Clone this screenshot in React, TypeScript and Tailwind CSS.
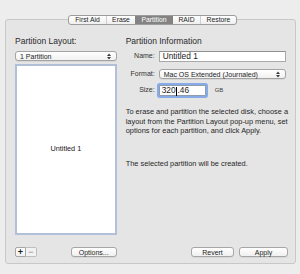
function UpDown() {
  return (
    <svg width="4" height="7" viewBox="0 0 4 7" className="shrink-0">
      <path d="M0 3 L2 0.5 L4 3 Z" fill="#3a3a3a" />
      <path d="M0 4 L2 6.5 L4 4 Z" fill="#3a3a3a" />
    </svg>
  );
}

function Popup({ label, className }: { label: string; className?: string }) {
  return (
    <div
      className={`flex items-center justify-between rounded-[3px] border border-[#a3a3a3] bg-gradient-to-b from-white to-[#f1f1f1] pl-[4px] pr-[5px] shadow-[0_1px_0_rgba(0,0,0,0.06)] ${className ?? ""}`}
    >
      <span className="text-[7px] leading-none text-[#1e1e1e]">{label}</span>
      <UpDown />
    </div>
  );
}

function Button({ label, className }: { label: string; className?: string }) {
  return (
    <div
      className={`flex h-[10px] items-center justify-center rounded-[3px] border border-[#a6a6a6] bg-gradient-to-b from-white to-[#f0f0f0] text-[7px] leading-none text-[#1e1e1e] shadow-[0_1px_0_rgba(0,0,0,0.06)] ${className ?? ""}`}
    >
      {label}
    </div>
  );
}

const tabs = [
  { name: "First Aid", w: "w-[37px]" },
  { name: "Erase", w: "w-[29px]" },
  { name: "Partition", w: "w-[38px]", active: true },
  { name: "RAID", w: "w-[27px]" },
  { name: "Restore", w: "w-[36px]" },
];

export default function App() {
  return (
    <div className="h-[274px] w-[300px] overflow-hidden bg-[#ededed] pl-[5px] pr-[4px] pt-[15px] font-['Liberation_Sans',Arial,sans-serif] text-[#222]">
      {/* segmented tabs */}
      <div className="relative z-10 -mb-[6px] ml-[63px] flex h-[10px] w-fit overflow-hidden rounded-[3px] border border-[#9c9c9c] bg-gradient-to-b from-white to-[#efefef]">
        {tabs.map((t, i) => (
          <div
            key={t.name}
            className={`flex items-center justify-center text-[6.8px] leading-none ${t.w} ${
              t.active ? "bg-[#838383] text-white" : "text-[#222]"
            } ${i > 0 && !t.active && !tabs[i - 1].active ? "border-l border-[#cfcfcf]" : ""}`}
          >
            {t.name}
          </div>
        ))}
      </div>

      {/* panel */}
      <div className="flex h-[245px] rounded-[3px] border border-[#c8c8c8] bg-[#e5e5e5] pb-[6px] pl-[9px] pr-[7px] pt-[16px]">
        {/* left column */}
        <div className="flex w-[102px] flex-col">
          <div className="h-[10px] text-[8.5px] leading-[10px] text-[#2a2a2a]">Partition Layout:</div>
          <Popup label="1 Partition" className="mt-[5px] h-[10px]" />
          <div className="mt-[3px] flex flex-1 items-center justify-center border-2 border-[#b1bfd9] bg-white">
            <span className="text-[7.3px] text-[#222]">Untitled 1</span>
          </div>
          <div className="mt-[12px] flex h-[10px] items-center justify-between">
            <div className="flex">
              <div className="flex h-[10px] w-[11px] items-center justify-center rounded-l-[2px] border border-[#a6a6a6] bg-gradient-to-b from-white to-[#f0f0f0] text-[9px] font-bold leading-none text-[#1a1a1a]">
                +
              </div>
              <div className="flex h-[10px] w-[11px] items-center justify-center rounded-r-[2px] border border-l-0 border-[#bdbdbd] bg-[#f2f2f2] text-[9px] font-bold leading-none text-[#a9a9a9]">
                −
              </div>
            </div>
            <Button label="Options..." className="w-[46px]" />
          </div>
        </div>

        {/* right column */}
        <div className="ml-[9px] flex flex-1 flex-col">
          <div className="h-[10px] text-[8.5px] leading-[10px] text-[#2a2a2a]">Partition Information</div>

          <div className="mt-[5px] grid h-[11px] grid-cols-[29px_1fr] items-center gap-x-[4px] pr-[2px]">
            <span className="text-right text-[7px] text-[#333]">Name:</span>
            <div className="flex h-[11px] items-center border border-[#a9a9a9] border-t-[#8f8f8f] bg-white pl-[3px] text-[8.3px] leading-none">
              Untitled 1
            </div>
          </div>

          <div className="mt-[7px] grid h-[10px] grid-cols-[29px_1fr] items-center gap-x-[4px] pr-[2px]">
            <span className="text-right text-[7px] text-[#333]">Format:</span>
            <Popup label="Mac OS Extended (Journaled)" className="h-[10px]" />
          </div>

          <div className="mt-[6px] grid h-[11px] grid-cols-[29px_1fr] items-center gap-x-[4px] pr-[2px]">
            <span className="text-right text-[7px] text-[#333]">Size:</span>
            <div className="flex items-center">
              <div className="flex h-[11px] w-[47px] items-center rounded-[1px] border border-[#8f9bb0] bg-white pl-[2px] text-[8.3px] leading-none shadow-[0_0_0_2px_#86abe6]">
                320
                <span className="mx-[0.5px] inline-block h-[9px] w-px translate-y-[1px] bg-black" />
                .46
              </div>
              <span className="ml-[9px] text-[6px] text-[#444]">GB</span>
            </div>
          </div>

          <p className="mt-[11px] whitespace-nowrap text-[7.4px] leading-[9.5px] text-[#262626]">
            To erase and partition the selected disk, choose a
            <br />
            layout from the Partition Layout pop-up menu, set
            <br />
            options for each partition, and click Apply.
          </p>

          <p className="mt-[23px] whitespace-nowrap text-[7.4px] leading-[9.5px] text-[#262626]">
            The selected partition will be created.
          </p>

          <div className="mt-auto flex h-[10px] justify-end gap-[5px]">
            <Button label="Revert" className="w-[43px]" />
            <Button label="Apply" className="w-[49px]" />
          </div>
        </div>
      </div>
    </div>
  );
}
